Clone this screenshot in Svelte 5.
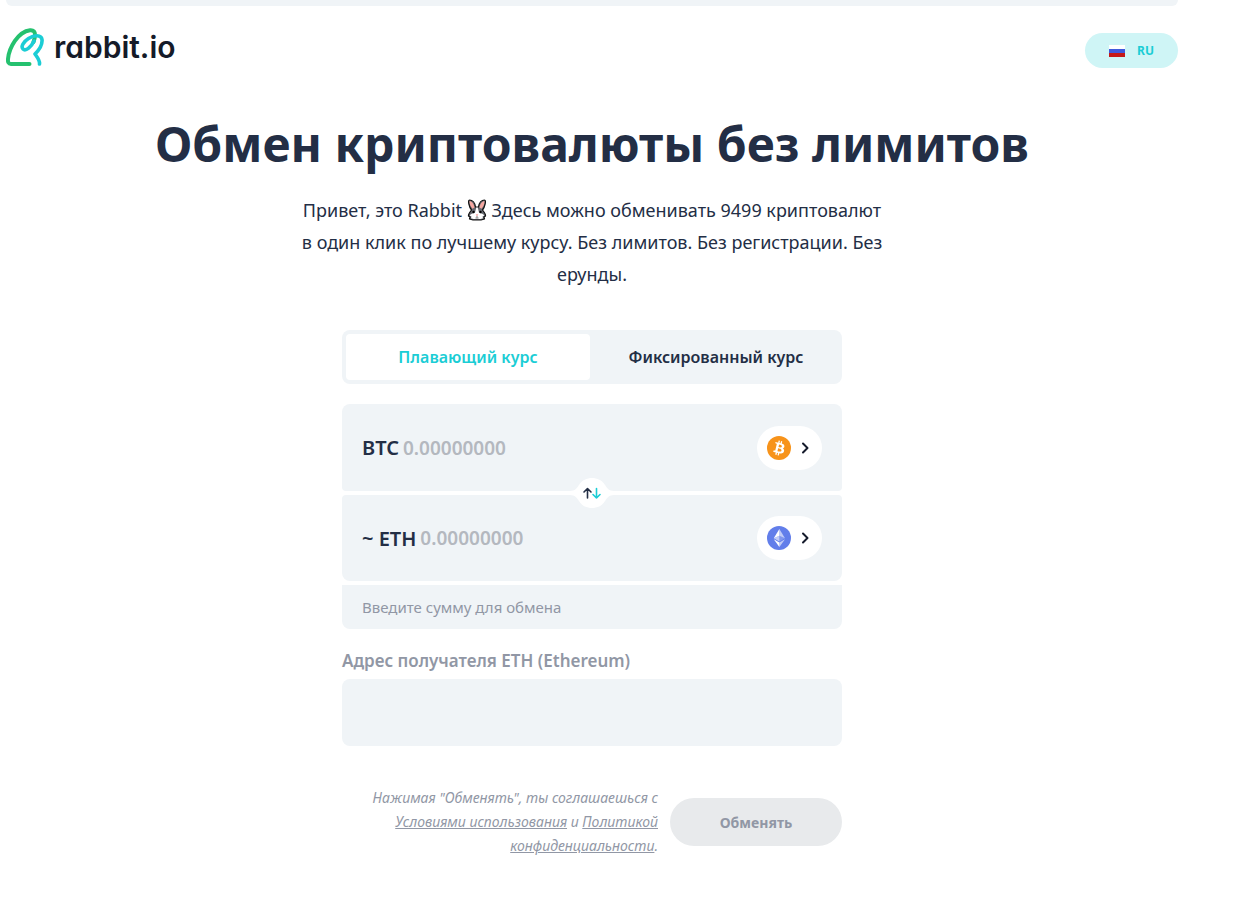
<script>
  let rate = $state('floating');
  let amount = $state('');
  let result = $state('');
  let address = $state('');
</script>

<div class="page">
  <div class="strip"></div>
  <header>
    <a class="logo" href="#home" aria-label="rabbit.io">
      <svg width="38" height="38" viewBox="0 0 38 38" fill="none" stroke-linecap="round" stroke-linejoin="round">
        <path d="M23.500 36H5C2.500 36 1.700 34 2 31C3 20 12 3.500 24 2.200C27.500 1.800 29.300 4 29 7.500C28.800 10 28.300 12 27.500 14" stroke="#25c16f" stroke-width="4" />
        <path d="M33.500 36C34 32 31 29 29 26C33 22 36.500 16 36 11.500C35.300 6.500 28 7 22.500 10.500C17.500 13.700 14.500 18.500 17 21C19.800 23.800 25.500 18.500 28 13" stroke="#1bcdd5" stroke-width="3.600" />
      </svg>
      <span>rabbit.io</span>
    </a>
    <button class="lang" type="button">
      <svg width="16" height="12" viewBox="0 0 16 12">
        <path fill="#fff" d="M0 0h16v4H0z" />
        <path fill="#4059dc" d="M0 4h16v4H0z" />
        <path fill="#c51918" d="M0 8h16v4H0z" />
      </svg>
      <span>RU</span>
    </button>
  </header>

  <main>
    <h1>Обмен криптовалюты без лимитов</h1>
    <p class="intro">
      Привет, это Rabbit
      <svg class="bunny" width="20" height="22" viewBox="0 0 20 22" role="img" aria-label="Кролик">
        <path fill="#666970" stroke="#111" stroke-width="1.200" stroke-linejoin="round" d="M4.500 11C2 8 .5 1 2.500 1C5.500 1 8 4 8.500 8H11.500C12 4 14.500 1 17.500 1C19.500 1 18 8 15.500 11C17 13 19 15 18.500 17L17 18L17.500 20L14 21H6L2.500 20L3 18L1.500 17C1 15 3 13 4.500 11Z" />
        <path fill="#f5a7a0" d="M2.500 2C5.500 2.500 7.200 6 7.500 8.500L5.500 9.700C3.500 7.500 2.500 5 2.500 2M17.500 2C14.500 2.500 12.800 6 12.500 8.500L14.500 9.700C16.500 7.500 17.500 5 17.500 2" />
        <path fill="#fff" d="M9.300 8.500H10.700L12 13.500C14 14.500 16.500 15 17.300 16.500L15.500 17.500L16 19.200L13.500 20H6.500L4 19.200L4.500 17.500L2.700 16.500C3.500 15 6 14.500 8 13.500Z" />
        <circle cx="6.500" cy="13" r="1.200" /><circle cx="13.500" cy="13" r="1.200" />
        <path d="M8.700 15.500H11.300L10 17Z" fill="#ef7775" />
        <path d="M10 17V18.500M8.500 19H11.500" stroke="#444" stroke-width=".7" />
      </svg>
      Здесь можно обменивать 9499 криптовалют в один клик по лучшему курсу. Без лимитов. Без регистрации. Без ерунды.
    </p>

    <form onsubmit={(e) => e.preventDefault()}>
      <div class="tabs">
        <button type="button" class:active={rate === 'floating'} aria-pressed={rate === 'floating'} onclick={() => (rate = 'floating')}>Плавающий курс</button>
        <button type="button" class:active={rate === 'fixed'} aria-pressed={rate === 'fixed'} onclick={() => (rate = 'fixed')}>Фиксированный курс</button>
      </div>

      <div class="pair">
        <div class="row">
          <label for="send">BTC</label>
          <input id="send" placeholder="0.00000000" inputmode="decimal" bind:value={amount} />
          <button class="coin" type="button" aria-label="BTC">
            <svg width="24" height="24" viewBox="0 0 32 32">
              <circle cx="16" cy="16" r="16" fill="#f7931a" />
              <path fill="#fff" d="M23.189 14.020c.314-2.096-1.283-3.223-3.465-3.975l.708-2.840-1.728-.430-.690 2.765c-.454-.114-.920-.220-1.385-.326l.695-2.783L15.596 6l-.708 2.839c-.376-.086-.746-.170-1.104-.260l.002-.009-2.384-.595-.460 1.846s1.283.294 1.256.312c.700.175.826.638.805 1.006l-.806 3.235c.048.012.110.030.180.057l-.183-.045-1.130 4.532c-.086.212-.303.531-.793.410.018.025-1.256-.313-1.256-.313l-.858 1.978 2.250.561c.418.105.828.215 1.231.318l-.715 2.872 1.727.430.708-2.840c.472.127.930.245 1.378.357l-.706 2.828 1.728.430.715-2.866c2.948.558 5.164.333 6.097-2.333.752-2.146-.037-3.385-1.588-4.192 1.130-.260 1.980-1.003 2.207-2.538zm-3.950 5.538c-.533 2.147-4.148.986-5.320.695l.950-3.805c1.172.293 4.929.872 4.370 3.110zm.535-5.569c-.487 1.953-3.495.960-4.470.717l.860-3.450c.975.243 4.118.696 3.610 2.733z" />
            </svg>
            <svg width="8" height="12" viewBox="0 0 8 12"><path d="M2 1.500L6.500 6L2 10.500" fill="none" stroke="#141a2b" stroke-width="2" stroke-linecap="round" stroke-linejoin="round" /></svg>
          </button>
        </div>
        <div class="row">
          <label for="receive">~ ETH</label>
          <input id="receive" placeholder="0.00000000" inputmode="decimal" bind:value={result} />
          <button class="coin" type="button" aria-label="ETH">
            <svg width="24" height="24" viewBox="0 0 32 32">
              <circle cx="16" cy="16" r="16" fill="#627eea" />
              <g fill="#fff">
                <path fill-opacity=".6" d="M16.500 4v8.870l7.497 3.350z" />
                <path d="M16.500 4L9 16.220l7.500-3.350z" />
                <path fill-opacity=".6" d="M16.500 21.968v6.027L24 17.616z" />
                <path d="M16.500 27.995v-6.028L9 17.616z" />
                <path fill-opacity=".2" d="M16.500 20.573l7.497-4.353-7.497-3.348z" />
                <path fill-opacity=".6" d="M9 16.220l7.500 4.353v-7.701z" />
              </g>
            </svg>
            <svg width="8" height="12" viewBox="0 0 8 12"><path d="M2 1.500L6.500 6L2 10.500" fill="none" stroke="#141a2b" stroke-width="2" stroke-linecap="round" stroke-linejoin="round" /></svg>
          </button>
        </div>
        <button class="swap" type="button" aria-label="Поменять местами">
          <svg width="44" height="30" viewBox="0 0 44 30" fill="none">
            <path fill="#fff" d="M0 13C5 13 7 10 9 7C12 2 17 0 22 0S32 2 35 7C37 10 39 13 44 13V17C39 17 37 20 35 23C32 28 27 30 22 30S12 28 9 23C7 20 5 17 0 17Z" />
            <g stroke-width="1.600" stroke-linecap="round" stroke-linejoin="round">
              <path stroke="#232e45" d="M17.500 20V10.500M14 14L17.500 10.500L21 14" />
              <path stroke="#1bcdd5" d="M26.500 10.500V20M23 16.500L26.500 20L30 16.500" />
            </g>
          </svg>
        </button>
      </div>
      <div class="hint">Введите сумму для обмена</div>

      <label class="caption" for="address">Адрес получателя ETH (Ethereum)</label>
      <input id="address" class="address" bind:value={address} />

      <div class="submit">
        <p>Нажимая "Обменять", ты соглашаешься с <a href="#terms">Условиями использования</a> и <a href="#privacy">Политикой конфиденциальности</a>.</p>
        <button type="submit" disabled>Обменять</button>
      </div>
    </form>
  </main>
</div>

<style>
  :global(body) {
    background: #fff;
  }
  .page {
    padding: 0 68px 48px 6px;
    font-family: "Noto Sans", sans-serif;
    font-size: 16px;
    color: #232e45;
  }
  .page :global(*) {
    box-sizing: border-box;
  }
  button, input {
    font: inherit;
    color: inherit;
    border: 0;
    padding: 0;
    background: none;
  }
  button {
    cursor: pointer;
  }
  svg {
    display: block;
    flex: none;
  }
  .strip {
    height: 6px;
    background: #f0f4f7;
    border-radius: 0 0 8px 8px;
  }
  header {
    display: flex;
    justify-content: space-between;
    align-items: center;
    padding-top: 20px;
  }
  .logo {
    display: flex;
    align-items: center;
    gap: 10px;
    color: #151b29;
    text-decoration: none;
    font-family: "Inter", sans-serif;
    font-size: 30px;
    line-height: 38px;
    font-weight: 600;
    font-feature-settings: "cv11" 1;
  }
  .lang {
    display: flex;
    align-items: center;
    gap: 12px;
    height: 35px;
    margin-top: 7px;
    padding: 0 24px;
    border-radius: 18px;
    background: #cff5f6;
    color: #1bcdd5;
    font-size: 12px;
    font-weight: 700;
  }
  main {
    display: flex;
    flex-direction: column;
    align-items: center;
  }
  h1 {
    margin: 44px 0 0;
    font-size: 48px;
    line-height: 64px;
    font-weight: 700;
    text-align: center;
  }
  .intro {
    max-width: 590px;
    margin: 18px 0 40px;
    font-size: 18px;
    line-height: 32px;
    text-align: center;
  }
  .bunny {
    display: inline-block;
    vertical-align: -4px;
  }
  form {
    width: 100%;
    max-width: 500px;
  }
  .tabs {
    display: grid;
    grid-template-columns: 1fr 1fr;
    gap: 4px;
    padding: 4px;
    margin-bottom: 20px;
    border-radius: 8px;
    background: #f0f4f7;
  }
  .tabs button {
    height: 46px;
    border-radius: 4px;
    font-weight: 600;
  }
  .tabs .active {
    background: #fff;
    color: #1bcdd5;
  }
  .pair {
    position: relative;
    display: grid;
    gap: 4px;
  }
  .row {
    display: flex;
    align-items: center;
    gap: 4px;
    height: 87px;
    padding: 0 20px;
    border-radius: 8px 8px 4px 4px;
    background: #f0f4f7;
    font-size: 20px;
    font-weight: 600;
  }
  .row + .row {
    height: 86px;
    border-radius: 4px 4px 8px 8px;
  }
  .row input {
    flex: 1;
    min-width: 0;
    font-size: 19px;
  }
  .row input::placeholder {
    color: #b4b8bf;
    opacity: 1;
  }
  .coin {
    display: flex;
    align-items: center;
    gap: 10px;
    height: 44px;
    padding: 0 13px 0 10px;
    border-radius: 22px;
    background: #fff;
  }
  .swap {
    position: absolute;
    top: 74px;
    left: calc(50% - 22px);
  }
  .hint {
    margin-top: 4px;
    padding: 0 20px;
    border-radius: 0 0 8px 8px;
    background: #f0f4f7;
    color: #9197a5;
    font-size: 15px;
    line-height: 44px;
  }
  .caption {
    display: block;
    margin: 20px 0 6px;
    color: #9197a5;
    font-size: 17px;
    font-weight: 600;
    line-height: 24px;
  }
  .address {
    display: block;
    width: 100%;
    height: 67px;
    padding: 0 20px;
    border-radius: 8px;
    background: #f0f4f7;
  }
  .submit {
    display: flex;
    align-items: center;
    justify-content: flex-end;
    gap: 12px;
    margin-top: 40px;
  }
  .submit p {
    max-width: 300px;
    margin: 0;
    color: #9197a5;
    font-size: 14px;
    line-height: 24px;
    font-style: italic;
    text-align: right;
  }
  .submit a {
    color: inherit;
  }
  .submit button {
    flex: none;
    width: 172px;
    height: 48px;
    border-radius: 24px;
    background: #e8eaec;
    color: #9197a5;
    font-size: 14px;
    font-weight: 700;
  }
</style>
